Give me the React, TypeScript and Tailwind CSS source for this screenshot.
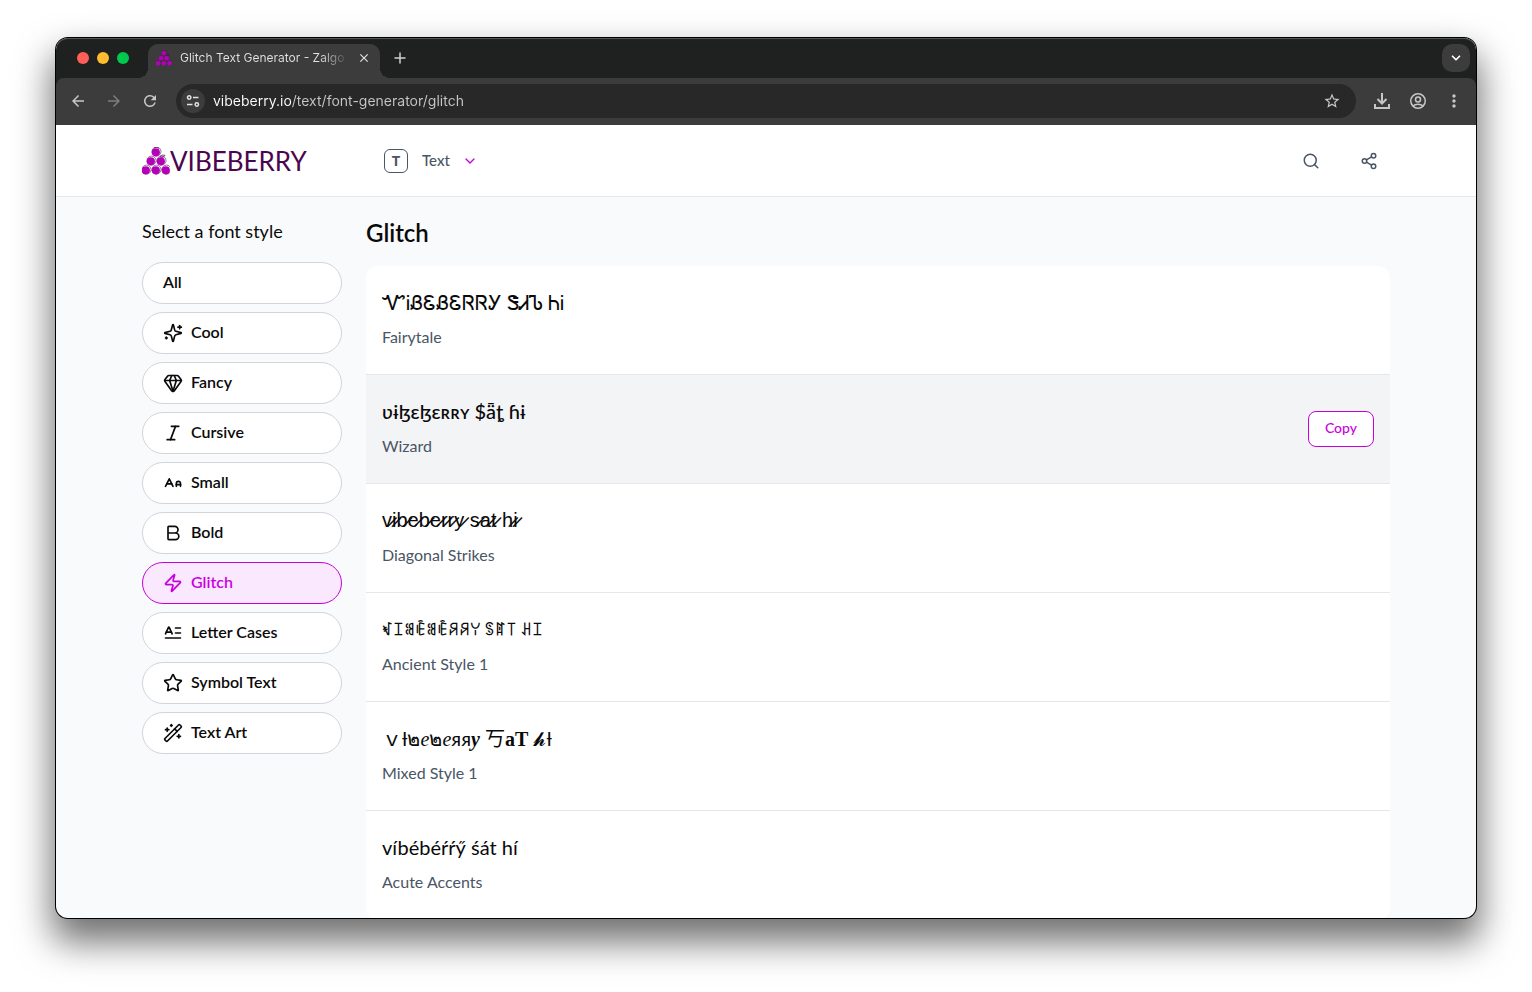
import { useState } from 'react';
import type { ReactElement, ReactNode } from 'react';
import { Bold, ChevronDown, Gem, Italic, Search, Share2, Star, WandSparkles, Zap } from 'lucide-react';
import { MdArrowBack, MdArrowForward, MdClose, MdMoreVert, MdRefresh, MdStarOutline } from 'react-icons/md';

type IconProps = { size?: number };

interface Category {
  label: string;
  icon?: (p: IconProps) => ReactElement;
}

interface Sample {
  name: string;
  text: ReactNode;
  font?: string;
}

function StrokeIcon({ size = 20, children }: IconProps & { children: ReactNode }) {
  return (
    <svg width={size} height={size} viewBox="0 0 24 24" fill="none" stroke="currentColor" strokeWidth="2" strokeLinecap="round" strokeLinejoin="round">
      {children}
    </svg>
  );
}

function SparklesIcon({ size }: IconProps) {
  return (
    <StrokeIcon size={size}>
      <path d="M9.937 15.5A2 2 0 0 0 8.5 14.063l-6.135-1.582a.5.5 0 0 1 0-.962L8.5 9.936A2 2 0 0 0 9.937 8.5l1.582-6.135a.5.5 0 0 1 .963 0L14.063 8.5A2 2 0 0 0 15.5 9.937l6.135 1.581a.5.5 0 0 1 0 .964L15.5 14.063a2 2 0 0 0-1.437 1.437l-1.582 6.135a.5.5 0 0 1-.963 0z" />
      <path d="M20 3v4" />
      <path d="M22 5h-4" />
      <path d="M4 17v2" />
      <path d="M5 18H3" />
    </StrokeIcon>
  );
}

function LetterSizes({ size }: IconProps) {
  return (
    <StrokeIcon size={size}>
      <path d="M21 14h-5" />
      <path d="M16 16v-3.5a2.5 2.5 0 0 1 5 0V16" />
      <path d="M4.5 13h6" />
      <path d="m3 16 4.5-9 4.5 9" />
    </StrokeIcon>
  );
}

function LetterLines({ size }: IconProps) {
  return (
    <StrokeIcon size={size}>
      <path d="M15 12h6" />
      <path d="M15 6h6" />
      <path d="m3 13 3.553-7.724a.5.5 0 0 1 .894 0L11 13" />
      <path d="M3 18h18" />
      <path d="M4 11h6" />
    </StrokeIcon>
  );
}

const CATEGORIES: Category[] = [
  { label: 'All' },
  { label: 'Cool', icon: SparklesIcon },
  { label: 'Fancy', icon: (p) => <Gem {...p} /> },
  { label: 'Cursive', icon: (p) => <Italic {...p} /> },
  { label: 'Small', icon: LetterSizes },
  { label: 'Bold', icon: (p) => <Bold {...p} /> },
  { label: 'Glitch', icon: (p) => <Zap {...p} /> },
  { label: 'Letter Cases', icon: LetterLines },
  { label: 'Symbol Text', icon: (p) => <Star {...p} /> },
  { label: 'Text Art', icon: (p) => <WandSparkles {...p} /> },
];

const serif = "font-['Liberation_Serif',serif]";

const SAMPLES: Sample[] = [
  { name: 'Fairytale', text: 'ᏉᎥᏰᏋᏰᏋᏒᏒᎩ ᏕᏗᏖ ᏂᎥ', font: 'text-xl' },
  { name: 'Wizard', text: 'ʋɨɮɛɮɛʀʀʏ $ǟȶ ɦɨ', font: 'text-xl font-medium' },
  { name: 'Diagonal Strikes', text: 'v̷i̷b̷e̷b̷e̷r̷r̷y̷ s̷a̷t̷ h̷i̷', font: "text-xl font-['Liberation_Sans',sans-serif]" },
  { name: 'Ancient Style 1', text: 'ꃴꀤꌃꍟꌃꍟꋪꋪꌩ ꌗꍏ꓄ ꃅꀤ', font: 'text-sm leading-7 font-bold pt-0.5' },
  {
    name: 'Mixed Style 1',
    text: (
      <>
        {'\uFF56'}ƚ๒<i className={serif}>e</i>๒<i className={serif}>e</i>яя
        <b className={serif}>
          <i>y</i>
        </b>{' '}
        丂<b className={serif}>aT</b> 𝓱ƚ
      </>
    ),
    font: 'text-xl',
  },
  { name: 'Acute Accents', text: 'víbébéŕŕӳ śát hí', font: 'text-xl' },
];

function BerryMark({ className }: { className?: string }) {
  const berries = [
    [14, 5],
    [9, 14],
    [19, 14],
    [4, 23],
    [14, 23],
    [24, 23],
  ];
  return (
    <svg viewBox="0 0 28 28" className={className}>
      {berries.map(([x, y]) => (
        <g key={`${x}-${y}`}>
          <circle cx={x + 0.5} cy={y - 0.4} r="4.5" fill="none" stroke="#5b0a63" strokeWidth="0.6" />
          <circle cx={x - 0.2} cy={y + 0.3} r="4.1" fill="#b400b8" />
        </g>
      ))}
      <path d="M18 9.5c1.5-1.5 3.5-1.8 5-1-1 1.5-2.5 2-4.5 1.6M12 1c1.5-.8 3.5-.8 5 .4" fill="none" stroke="#5b0a63" strokeWidth="0.8" />
    </svg>
  );
}

function ToolButton({ label, dim, children }: { label: string; dim?: boolean; children: ReactNode }) {
  return (
    <button aria-label={label} className={`grid size-9 shrink-0 place-items-center ${dim ? 'text-[#7d7d7d]' : 'text-[#c7c7c7]'}`}>
      {children}
    </button>
  );
}

function TabStrip() {
  return (
    <div className="flex h-10 shrink-0 items-end rounded-t-xl bg-[#1f2120] pr-1.5 shadow-[inset_0_1px_0_#555]">
      <div className="flex h-full w-[92px] shrink-0 items-center gap-2 pl-[21px]">
        <span className="size-3 rounded-full bg-[#ff5f57]" />
        <span className="size-3 rounded-full bg-[#febc2e]" />
        <span className="size-3 rounded-full bg-[#00ca4e]" />
      </div>
      <div className="relative flex h-[34px] w-[232px] items-center rounded-t-[10px] bg-[#3c3c3c] px-2 pb-1.5">
        <span className="absolute bottom-0 -left-2.5 size-2.5 bg-[radial-gradient(circle_at_0_0,transparent_10px,#3c3c3c_10px)]" />
        <span className="absolute -right-2.5 bottom-0 size-2.5 bg-[radial-gradient(circle_at_100%_0,transparent_10px,#3c3c3c_10px)]" />
        <BerryMark className="size-4 shrink-0" />
        <span className="ml-2 min-w-0 flex-1 overflow-hidden bg-[linear-gradient(90deg,#e3e3e3_85%,#5a5a5a)] bg-clip-text text-xs whitespace-nowrap text-transparent">
          Glitch Text Generator - Zalgo
        </span>
        <button aria-label="Close tab" className="ml-3 grid size-4 shrink-0 place-items-center text-[#e3e3e3]">
          <MdClose size={14} />
        </button>
      </div>
      <button aria-label="New tab" className="ml-1.5 grid size-7 place-items-center self-center text-[#d0d0d0]">
        <svg width="12" height="12" viewBox="0 0 12 12" fill="none" stroke="currentColor" strokeWidth="1.5">
          <path d="M6 .5v11M.5 6h11" />
        </svg>
      </button>
      <button aria-label="Search tabs" className="ml-auto grid size-7 place-items-center self-center rounded-[10px] bg-[#3c3c3c] text-white">
        <ChevronDown size={14} strokeWidth={3} />
      </button>
    </div>
  );
}

function Toolbar() {
  return (
    <div className="bg-[#1f2120]">
      <div className="flex h-[47px] items-center rounded-t-lg bg-[#3c3c3c] px-1 pb-px">
        <ToolButton label="Back">
          <MdArrowBack size={18} />
        </ToolButton>
        <ToolButton label="Forward" dim>
          <MdArrowForward size={18} />
        </ToolButton>
        <ToolButton label="Reload">
          <MdRefresh size={18} />
        </ToolButton>
        <div className="mx-2 flex h-[34px] flex-1 items-center rounded-full bg-[#282828] pr-1.5 pl-[5px]">
          <button aria-label="Site information" className="grid size-6 shrink-0 place-items-center rounded-full bg-[#3c3c3c] text-[#e3e3e3]">
            <svg width="14" height="14" viewBox="0 0 14 14" fill="none" stroke="currentColor" strokeWidth="1.5">
              <circle cx="3.2" cy="3.5" r="1.7" />
              <path d="M7 3.5h5.5M1 10.5h5.5" />
              <circle cx="10.8" cy="10.5" r="1.7" />
            </svg>
          </button>
          <input
            aria-label="Address"
            readOnly
            value="vibeberry.io/text/font-generator/glitch"
            className="ml-2 min-w-0 flex-1 bg-[linear-gradient(90deg,#ffffff_79px,#c7c7c7_79px)] bg-clip-text text-sm text-transparent outline-none"
          />
          <ToolButton label="Bookmark">
            <MdStarOutline size={18} />
          </ToolButton>
        </div>
        <ToolButton label="Downloads">
          <svg width="18" height="18" viewBox="0 0 18 18" fill="none" stroke="currentColor" strokeWidth="2">
            <path d="M9 1v10M4.5 7 9 11.5 13.5 7M2 12v4h14v-4" />
          </svg>
        </ToolButton>
        <ToolButton label="Profile">
          <svg width="18" height="18" viewBox="0 0 18 18" fill="none" stroke="currentColor" strokeWidth="1.5">
            <circle cx="9" cy="9" r="7.25" />
            <circle cx="9" cy="7.5" r="2.5" />
            <path d="M3.8 14c2.8-2.4 7.6-2.4 10.4 0" />
          </svg>
        </ToolButton>
        <ToolButton label="Menu">
          <MdMoreVert size={20} />
        </ToolButton>
      </div>
    </div>
  );
}

function SiteHeader() {
  return (
    <header className="border-b border-gray-200 bg-white">
      <div className="mx-auto flex h-[71px] max-w-7xl items-center px-4">
        <a href="#home" className="flex w-[242px] items-center text-[#4a064f]">
          <BerryMark className="size-7" />
          <span className="text-[26px] leading-8">VIBEBERRY</span>
        </a>
        <button className="flex items-center text-[15px] font-medium text-gray-600">
          <span className="grid size-6 place-items-center rounded-md border border-gray-600 text-sm font-black">T</span>
          <span className="ml-3.5">Text</span>
          <ChevronDown size={16} className="ml-3 text-fuchsia-600" />
        </button>
        <div className="ml-auto flex gap-4 text-gray-600">
          <button aria-label="Search" className="grid size-[42px] place-items-center">
            <Search size={18} />
          </button>
          <button aria-label="Share" className="grid size-[42px] place-items-center">
            <Share2 size={18} />
          </button>
        </div>
      </div>
    </header>
  );
}

export default function App() {
  const [active, setActive] = useState('Glitch');
  const [hovered, setHovered] = useState('Wizard');

  return (
    <div className="h-screen bg-white px-14 pt-[38px] pb-[74px] font-['Inter',sans-serif]">
      <div className="flex h-full flex-col overflow-hidden rounded-xl bg-gray-50 shadow-[0_0_0_1px_#000,0_20px_36px_4px_rgba(0,0,0,0.56)]">
        <TabStrip />
        <Toolbar />
        <div className="min-h-0 flex-1 overflow-hidden font-['Lato','Noto_Sans','Noto_Sans_CJK_JP',sans-serif] text-neutral-950">
          <SiteHeader />
          <div className="mx-auto flex max-w-7xl gap-6 px-4">
            <aside className="w-[200px] shrink-0 pt-5">
              <h2 className="text-lg leading-7">Select a font style</h2>
              <nav className="mt-[17px] flex flex-col gap-2">
                {CATEGORIES.map(({ label, icon: Icon }) => (
                  <button
                    key={label}
                    onClick={() => setActive(label)}
                    className={`flex h-[42px] items-center gap-2 rounded-full border px-5 font-semibold ${
                      active === label ? 'border-fuchsia-600 bg-fuchsia-100 text-fuchsia-600' : 'border-gray-300 bg-white'
                    }`}
                  >
                    {Icon && <Icon size={20} />}
                    <span className="pb-0.5">{label}</span>
                  </button>
                ))}
              </nav>
            </aside>
            <main className="min-w-0 flex-1 pt-5">
              <h1 className="text-2xl leading-8 font-semibold">{active}</h1>
              <ul className="mt-[17px] overflow-hidden rounded-xl">
                {SAMPLES.map((s) => (
                  <li
                    key={s.name}
                    onMouseEnter={() => setHovered(s.name)}
                    className={`flex items-center justify-between border-b border-gray-200 px-4 ${hovered === s.name ? 'bg-gray-100' : 'bg-white'}`}
                  >
                    <div className="pt-[22px] pb-[25px]">
                      <div className="flex h-7 items-center">
                        <p className={s.font}>{s.text}</p>
                      </div>
                      <p className="mt-[9px] leading-6 text-gray-600">{s.name}</p>
                    </div>
                    {hovered === s.name && (
                      <button className="h-9 rounded-lg border border-fuchsia-600 bg-white px-4 pb-0.5 text-sm font-medium text-fuchsia-600">Copy</button>
                    )}
                  </li>
                ))}
              </ul>
            </main>
          </div>
        </div>
      </div>
    </div>
  );
}
